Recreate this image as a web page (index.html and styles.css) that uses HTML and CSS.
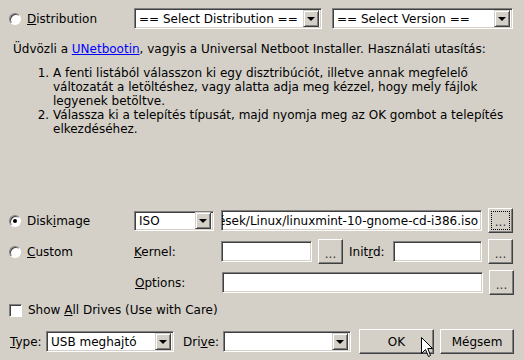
FILE: index.html
```html
<!DOCTYPE html>
<html lang="hu">
<head>
    <meta charset="UTF-8">
    <title>UNetbootin</title>
    <link rel="stylesheet" href="styles.css">
</head>
<body>

<div class="window">
    <div class="row dist-row">
        <label class="opt"><span class="radio"></span><span><u>D</u>istribution</span></label>
        <div class="combo w-dist"><span class="combo-text">== Select Distribution ==</span><span class="arrow"></span></div>
        <div class="combo w-ver"><span class="combo-text">== Select Version ==</span><span class="arrow"></span></div>
    </div>

    <p class="intro">Üdvözli a <a href="#">UNetbootin</a>, vagyis a Universal Netboot Installer. Használati utasítás:</p>
    <ol class="steps">
        <li>A fenti listából válasszon ki egy disztribúciót, illetve annak megfelelő változatát a letöltéshez, vagy alatta adja meg kézzel, hogy mely fájlok legyenek betöltve.</li>
        <li>Válassza ki a telepítés típusát, majd nyomja meg az OK gombot a telepítés elkezdéséhez.</li>
    </ol>

    <div class="custom-box">
        <div class="row">
            <label class="opt"><span class="radio checked"></span><span>Disk<u>i</u>mage</span></label>
            <div class="combo w-iso"><span class="combo-text">ISO</span><span class="arrow"></span></div>
            <div class="field w-path"><span class="path">/home/user/Letöltések/Linux/linuxmint-10-gnome-cd-i386.iso</span></div>
            <button class="btn dots focus"><span>...</span></button>
        </div>
        <div class="row">
            <label class="opt"><span class="radio"></span><span><u>C</u>ustom</span></label>
            <span class="lbl w-lbl"><u>K</u>ernel:</span>
            <div class="field w-kernel"></div>
            <button class="btn dots"><span>...</span></button>
            <span class="lbl w-initrd">Init<u>r</u>d:</span>
            <div class="field w-initrd-field"></div>
            <button class="btn dots"><span>...</span></button>
        </div>
        <div class="row">
            <span class="spacer"></span>
            <span class="lbl w-lbl"><u>O</u>ptions:</span>
            <div class="field w-path"></div>
            <button class="btn dots"><span>...</span></button>
        </div>
    </div>

    <label class="check-row"><span class="checkbox"></span><span>Show <u>A</u>ll Drives (Use with Care)</span></label>

    <div class="row bottom-row">
        <span class="lbl w-type"><u>T</u>ype:</span>
        <div class="combo w-usb"><span class="combo-text">USB meghajtó</span><span class="arrow"></span></div>
        <span class="lbl w-drive">Dri<u>v</u>e:</span>
        <div class="combo w-usb"><span class="combo-text"></span><span class="arrow"></span></div>
        <button class="btn push ok">OK</button>
        <button class="btn push cancel">Mégsem</button>
    </div>

    <svg class="cursor" width="13" height="21" viewBox="0 0 13 21">
        <path d="M0.5 0.5 L0.5 16.5 L4.5 12.5 L7.5 19.5 L9.5 18.5 L6.8 11.5 L11.5 11.5 Z" fill="#fff" stroke="#000" stroke-width="1"/>
    </svg>
</div>

</body>
</html>
```

FILE: styles.css
```css
body {
    margin: 0;
    background-color: #d4d0c8;
    font-family: "DejaVu Sans", sans-serif;
    font-size: 12px;
    color: #000;
}
.window {
    position: relative;
    width: 524px;
    height: 360px;
    padding: 0 10px;
    box-sizing: border-box;
    overflow: hidden;
}
.row {
    display: flex;
    align-items: center;
    height: 25px;
}
.dist-row {
    margin-top: 7px;
    height: 23px;
}
.opt {
    display: flex;
    align-items: center;
    gap: 6px;
    width: 125px;
    margin-left: -1px;
    flex: none;
}
.spacer {
    width: 125px;
    flex: none;
}
.radio {
    width: 10px;
    height: 10px;
    border: 1px solid;
    border-color: #808080 #fff #fff #808080;
    border-radius: 50%;
    background: #fff;
    box-shadow: inset 1px 1px 0 #404040;
    position: relative;
}
.radio.checked::after {
    content: "";
    position: absolute;
    left: 3px;
    top: 3px;
    width: 4px;
    height: 4px;
    border-radius: 50%;
    background: #000;
}
u {
    text-decoration: underline;
}
.combo, .field {
    height: 21px;
    box-sizing: border-box;
    background: #fff;
    border: 1px solid;
    border-color: #808080 #fff #fff #808080;
    box-shadow: inset 1px 1px 0 #404040, inset -1px -1px 0 #d4d0c8;
    display: flex;
    align-items: center;
    flex: none;
}
.combo {
    padding: 2px;
}
.combo-text {
    flex: 1;
    padding-left: 2px;
    white-space: nowrap;
    overflow: hidden;
}
.arrow {
    width: 16px;
    height: 17px;
    box-sizing: border-box;
    background: #d4d0c8;
    border: 1px solid;
    border-color: #d4d0c8 #404040 #404040 #d4d0c8;
    box-shadow: inset 1px 1px 0 #fff, inset -1px -1px 0 #808080;
    position: relative;
    flex: none;
}
.arrow::after {
    content: "";
    position: absolute;
    left: 3px;
    top: 6px;
    border-left: 4px solid transparent;
    border-right: 4px solid transparent;
    border-top: 4px solid #000;
}
.w-dist { width: 188px; }
.w-ver { width: 181px; margin-left: 10px; }
.w-iso { width: 80px; height: 20px; }
.w-path { width: 261px; margin-left: 7px; }
.w-lbl { width: 87px; }
.w-kernel { width: 91px; }
.w-initrd { width: 44px; margin-left: 6px; }
.w-initrd-field { width: 89px; }
.w-type { width: 36px; }
.w-usb { width: 128px; }
.w-drive { width: 40px; margin-left: 9px; }
.w-path.field {
    justify-content: flex-end;
    overflow: hidden;
    padding-right: 3px;
}
.w-lbl + .field { margin-left: 0; }
.path {
    white-space: nowrap;
}
.lbl {
    flex: none;
    white-space: nowrap;
}
.intro {
    margin: 12px 0 0 3px;
    line-height: 14px;
}
.intro a {
    color: #0000ff;
}
.steps {
    margin: 10px 0 0 0;
    padding-left: 43px;
    line-height: 14px;
    width: 455px;
}
.custom-box {
    margin-top: 72px;
    display: flex;
    flex-direction: column;
    gap: 6px;
}
.btn {
    font-family: "DejaVu Sans", sans-serif;
    font-size: 12px;
    color: #000;
    background: #d4d0c8;
    border: 1px solid;
    border-color: #fff #404040 #404040 #fff;
    box-shadow: inset -1px -1px 0 #808080;
    padding: 0;
    flex: none;
}
.dots {
    width: 25px;
    height: 25px;
    margin-left: 6px;
    line-height: 12px;
    color: #333;
}
.dots span {
    display: flex;
    align-items: center;
    justify-content: center;
    position: relative;
    top: 2px;
}
.dots.focus span {
    margin: 2px;
    height: 17px;
    border: 1px dotted #000;
    top: 0;
    align-items: flex-end;
    line-height: 14px;
}
.check-row {
    display: flex;
    align-items: center;
    gap: 6px;
    margin-top: 8px;
    height: 14px;
    margin-left: -1px;
}
.checkbox {
    width: 11px;
    height: 11px;
    background: #fff;
    border: 1px solid;
    border-color: #808080 #fff #fff #808080;
    box-shadow: inset 1px 1px 0 #404040;
}
.bottom-row {
    margin-top: 12px;
}
.push {
    height: 25px;
}
.ok {
    width: 75px;
    margin-left: 8px;
}
.cancel {
    width: 74px;
    margin-left: 6px;
}
.cursor {
    position: absolute;
    left: 421px;
    top: 337px;
}
```
